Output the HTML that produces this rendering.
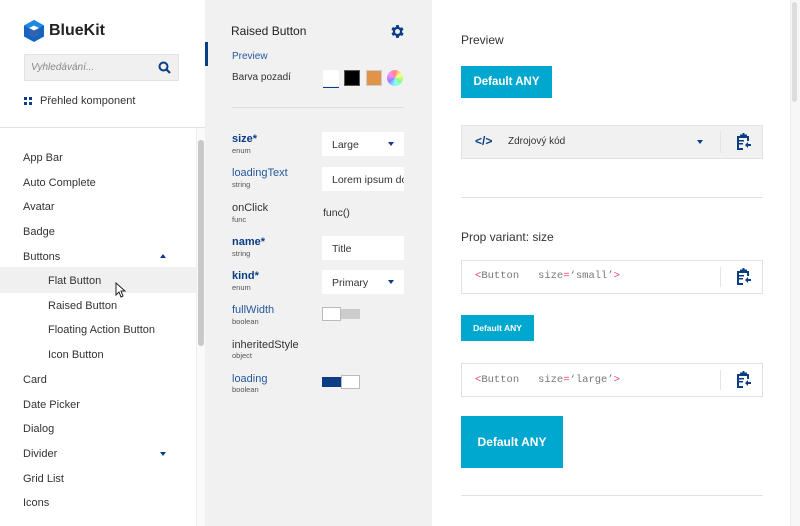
<!DOCTYPE html>
<html><head><meta charset="utf-8"><style>
*{margin:0;padding:0;box-sizing:border-box}
body{width:800px;height:526px;overflow:hidden;background:#fff;font-family:"Liberation Sans",sans-serif;color:#333;position:relative;font-size:11px}
.a{position:absolute;white-space:nowrap}
.blue{color:#0b3d86}
.lbl{font-size:11px;line-height:12px}
.typ{font-size:7.5px;color:#555;line-height:9px}
.inp{position:absolute;background:#fff;height:24px;left:322px;width:82px;padding:7px 10px;font-size:10.5px;overflow:hidden;white-space:nowrap}
.caret{position:absolute;width:0;height:0;border-left:3.5px solid transparent;border-right:3.5px solid transparent;border-top:4px solid #0b3d86}
.caretu{position:absolute;width:0;height:0;border-left:3.5px solid transparent;border-right:3.5px solid transparent;border-bottom:4px solid #0b3d86}
.nav{position:absolute;left:23px;font-size:11px;color:#333}
.btn{position:absolute;background:#00a7cf;color:#fff;font-weight:bold;text-align:center}
.code{position:absolute;left:461px;width:302px;border:1px solid #e2e2e2;font-family:"Liberation Mono",monospace;font-size:10px;color:#777}
.pk{color:#e5356f}
.sep{position:absolute;width:1px;background:#e4e4e4}
</style></head><body>
<svg class="a" style="left:24px;top:20px" width="20" height="22" viewBox="0 0 20 22"><polygon points="10,0 20,5.5 20,16.5 10,22 0,16.5 0,5.5" fill="#1565c0"/><polygon points="10,0 20,5.5 10,11 0,5.5" fill="#1e88e5"/><polygon points="5,8 10,5.5 15,8 15,14 10,16.5 5,14" fill="#fff"/><polygon points="5,8 10,10.5 15,8 15,14 10,16.5 5,14" fill="#0d47a1" opacity=".85"/></svg>
<div class="a" style="left:49px;top:22px;font-size:16px;font-weight:bold;color:#222">BlueKit</div>
<div class="a" style="left:24px;top:54px;width:155px;height:27px;background:#f0f0f0;border:1px solid #e2e2e2"></div>
<div class="a" style="left:31px;top:62px;font-size:10px;font-style:italic;color:#888">Vyhledávání...</div>
<svg class="a" style="left:158px;top:61px" width="13" height="13" viewBox="0 0 13 13"><circle cx="5.5" cy="5.5" r="4" fill="none" stroke="#0b3d86" stroke-width="2"/><line x1="8.5" y1="8.5" x2="12" y2="12" stroke="#0b3d86" stroke-width="2.2"/></svg>
<svg class="a" style="left:24px;top:97px" width="8" height="8"><rect x="0" y="0" width="3" height="3" fill="#0b3d86"/><rect x="5" y="0" width="3" height="3" fill="#0b3d86"/><rect x="0" y="5" width="3" height="3" fill="#0b3d86"/><rect x="5" y="5" width="3" height="3" fill="#0b3d86"/></svg>
<div class="a" style="left:40px;top:95px;font-size:11px">Přehled komponent</div>
<div class="a" style="left:0;top:127px;width:205px;height:1px;background:#e2e2e2"></div>
<div class="a" style="left:196px;top:128px;width:9px;height:398px;background:#fafafa;border-left:1px solid #eee"></div>
<div class="a" style="left:198px;top:140px;width:6px;height:206px;background:#c8c8c8;border-radius:3px"></div>
<div class="a" style="left:0;top:267px;width:196px;height:26px;background:#f0f0f0"></div>
<div class="nav" style="top:152px">App Bar</div>
<div class="nav" style="top:177px">Auto Complete</div>
<div class="nav" style="top:201px">Avatar</div>
<div class="nav" style="top:226px">Badge</div>
<div class="nav" style="top:251px">Buttons</div>
<div class="caretu" style="left:160px;top:254px"></div>
<div class="nav" style="top:275px;left:48px">Flat Button</div>
<div class="nav" style="top:300px;left:48px">Raised Button</div>
<div class="nav" style="top:324px;left:48px">Floating Action Button</div>
<div class="nav" style="top:349px;left:48px">Icon Button</div>
<div class="nav" style="top:374px">Card</div>
<div class="nav" style="top:399px">Date Picker</div>
<div class="nav" style="top:423px">Dialog</div>
<div class="nav" style="top:448px">Divider</div>
<div class="caret" style="left:160px;top:452px"></div>
<div class="nav" style="top:473px">Grid List</div>
<div class="nav" style="top:497px">Icons</div>
<svg class="a" style="left:115px;top:282px" width="11" height="16" viewBox="0 0 11 16"><path d="M1,1 L1,13 L4,10 L6,15 L8,14 L6,9 L10,9 Z" fill="#fff" stroke="#222" stroke-width="1"/></svg>
<div class="a" style="left:205px;top:0;width:227px;height:526px;background:#f1f1f1"></div>
<div class="a" style="left:205px;top:42px;width:3px;height:24px;background:#0b3d86"></div>
<div class="a" style="left:231px;top:24px;font-size:12px;color:#222">Raised Button</div>
<svg class="a" style="left:389px;top:23px" width="17" height="17" viewBox="0 0 24 24"><path fill="#0b3d86" d="M19.4 13a7.5 7.5 0 000-2l2.1-1.6-2-3.5-2.5 1a7 7 0 00-1.7-1L15 3h-4l-.4 2.7a7 7 0 00-1.7 1l-2.5-1-2 3.5L6.6 11a7.5 7.5 0 000 2l-2.1 1.6 2 3.5 2.5-1a7 7 0 001.7 1L11 21h4l.4-2.7a7 7 0 001.7-1l2.5 1 2-3.5zM13 15.5a3.5 3.5 0 110-7 3.5 3.5 0 010 7z" transform="translate(-1 0)"/></svg>
<div class="a blue" style="left:232px;top:51px;font-size:10px;color:#24589e">Preview</div>
<div class="a" style="left:232px;top:72px;font-size:10px">Barva pozadí</div>
<div class="a" style="left:323px;top:70px;width:16px;height:16px;background:#fff"></div>
<div class="a" style="left:323px;top:87px;width:16px;height:1px;background:#0b3d86"></div>
<div class="a" style="left:344px;top:70px;width:16px;height:16px;background:#000;border:1px solid #555"></div>
<div class="a" style="left:366px;top:70px;width:16px;height:16px;background:#e2934a;border:1px solid #ccc"></div>
<div class="a" style="left:387px;top:70px;width:16px;height:16px;border-radius:50%;background:conic-gradient(#f88,#ff8,#8f8,#8ff,#88f,#f8f,#f88)"></div>
<div class="a" style="left:232px;top:107px;width:172px;height:1px;background:#ddd"></div>
<div class="a lbl blue" style="left:232px;top:133px;font-weight:bold">size*</div><div class="a typ" style="left:232px;top:146px">enum</div>
<div class="inp" style="top:132px">Large</div><div class="caret" style="left:388px;top:142px"></div>
<div class="a lbl" style="left:232px;top:167px;color:#24589e">loadingText</div><div class="a typ" style="left:232px;top:180px">string</div>
<div class="inp" style="top:167px">Lorem ipsum dolor</div>
<div class="a lbl" style="left:232px;top:202px">onClick</div><div class="a typ" style="left:232px;top:215px">func</div>
<div class="a" style="left:323px;top:207px;font-size:10.5px">func()</div>
<div class="a lbl blue" style="left:232px;top:236px;font-weight:bold">name*</div><div class="a typ" style="left:232px;top:249px">string</div>
<div class="inp" style="top:236px">Title</div>
<div class="a lbl blue" style="left:232px;top:270px;font-weight:bold">kind*</div><div class="a typ" style="left:232px;top:283px">enum</div>
<div class="inp" style="top:270px">Primary</div><div class="caret" style="left:388px;top:280px"></div>
<div class="a lbl" style="left:232px;top:304px;color:#24589e">fullWidth</div><div class="a typ" style="left:232px;top:317px">boolean</div>
<div class="a" style="left:322px;top:309px;width:38px;height:10px;background:#ccc"></div>
<div class="a" style="left:322px;top:307px;width:19px;height:14px;background:#fff;border:1px solid #bbb"></div>
<div class="a lbl" style="left:232px;top:339px">inheritedStyle</div><div class="a typ" style="left:232px;top:351px">object</div>
<div class="a lbl" style="left:232px;top:373px;color:#24589e">loading</div><div class="a typ" style="left:232px;top:385px">boolean</div>
<div class="a" style="left:322px;top:377px;width:38px;height:10px;background:#0b3d86"></div>
<div class="a" style="left:341px;top:375px;width:19px;height:14px;background:#fff;border:1px solid #bbb"></div>
<div class="a" style="left:790px;top:0;width:10px;height:526px;background:#f7f7f7;border-left:1px solid #eee"></div>
<div class="a" style="left:792px;top:2px;width:5px;height:100px;background:#ddd;border-radius:3px"></div>
<div class="a" style="left:461px;top:33px;font-size:12px">Preview</div>
<div class="btn" style="left:461px;top:66px;width:91px;height:32px;line-height:32px;font-size:11.5px">Default ANY</div>
<div class="code" style="top:125px;height:34px;background:#f1f1f1"></div>
<div class="a" style="left:475px;top:134px;font-weight:bold;color:#0b3d86;font-size:12px">&lt;/&gt;</div>
<div class="a" style="left:508px;top:136px;font-size:10px">Zdrojový kód</div>
<div class="caret" style="left:697px;top:140px"></div>
<div class="sep" style="left:720px;top:131px;height:22px"></div>
<svg class="a" style="left:736px;top:133px" width="15" height="17" viewBox="0 0 15 17"><path d="M1,3h3v-1.5h2.5v-1.5h2v1.5h2.5v1.5h2v5h-2v-3h-8v10h4v2h-6z" fill="#0b3d86"/><rect x="3" y="7" width="5" height="1.5" fill="#0b3d86"/><rect x="3" y="10" width="4" height="1.5" fill="#0b3d86"/><path d="M9,12l3-3v2h3v2h-3v2z" fill="#0b3d86"/></svg>
<div class="a" style="left:461px;top:197px;width:302px;height:1px;background:#e2e2e2"></div>
<div class="a" style="left:461px;top:230px;font-size:12px">Prop variant: size</div>
<div class="code" style="top:260px;height:34px"></div>
<div class="a" style="left:475px;top:270px;font-family:'Liberation Mono',monospace;font-size:10.5px;color:#777"><span class="pk">&lt;</span>Button &nbsp; size<span class="pk">=</span>‘small’<span class="pk">&gt;</span></div>
<div class="sep" style="left:720px;top:267px;height:20px"></div>
<svg class="a" style="left:736px;top:268px" width="15" height="17" viewBox="0 0 15 17"><path d="M1,3h3v-1.5h2.5v-1.5h2v1.5h2.5v1.5h2v5h-2v-3h-8v10h4v2h-6z" fill="#0b3d86"/><rect x="3" y="7" width="5" height="1.5" fill="#0b3d86"/><rect x="3" y="10" width="4" height="1.5" fill="#0b3d86"/><path d="M9,12l3-3v2h3v2h-3v2z" fill="#0b3d86"/></svg>
<div class="btn" style="left:461px;top:315px;width:73px;height:26px;line-height:26px;font-size:8.5px">Default ANY</div>
<div class="code" style="top:363px;height:34px"></div>
<div class="a" style="left:475px;top:374px;font-family:'Liberation Mono',monospace;font-size:10.5px;color:#777"><span class="pk">&lt;</span>Button &nbsp; size<span class="pk">=</span>‘large’<span class="pk">&gt;</span></div>
<div class="sep" style="left:720px;top:370px;height:20px"></div>
<svg class="a" style="left:736px;top:371px" width="15" height="17" viewBox="0 0 15 17"><path d="M1,3h3v-1.5h2.5v-1.5h2v1.5h2.5v1.5h2v5h-2v-3h-8v10h4v2h-6z" fill="#0b3d86"/><rect x="3" y="7" width="5" height="1.5" fill="#0b3d86"/><rect x="3" y="10" width="4" height="1.5" fill="#0b3d86"/><path d="M9,12l3-3v2h3v2h-3v2z" fill="#0b3d86"/></svg>
<div class="btn" style="left:461px;top:416px;width:102px;height:52px;line-height:52px;font-size:12px">Default ANY</div>
<div class="a" style="left:461px;top:495px;width:302px;height:1px;background:#e2e2e2"></div>
</body></html>
